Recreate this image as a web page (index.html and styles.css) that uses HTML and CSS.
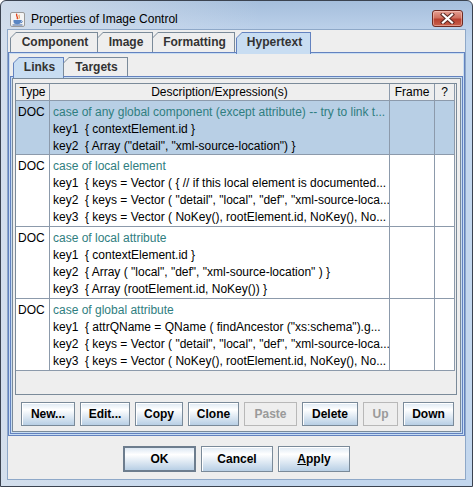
FILE: index.html
```html
<!DOCTYPE html>
<html>
<head>
<meta charset="utf-8">
<link rel="stylesheet" href="styles.css">
</head>
<body>
<div class="window">
  <div class="titlebar">
    <svg class="app-icon" width="15" height="15" viewBox="0 0 15 15">
      <rect x="0.5" y="0.5" width="14" height="14" rx="1.5" fill="#f4f4f4" stroke="#9a9a9a"/>
      <path d="M7 1.8 C5 3.8 9 4.8 7 7.2" fill="none" stroke="#e0401a" stroke-width="1.3"/>
      <path d="M9.3 2.8 C8.3 4.3 10.3 4.8 8.8 6.8" fill="none" stroke="#ee8a2a" stroke-width="1"/>
      <path d="M3.5 8 h7.5 v1.8 c0 2 -2 2.4 -3.75 2.4 s-3.75 -0.4 -3.75 -2.4 z" fill="#5a86c4"/>
      <path d="M11 8.6 c1.8 0 1.8 2 0 2.1" fill="none" stroke="#5a86c4" stroke-width="1"/>
      <path d="M2.5 13 h10" stroke="#3f64a0" stroke-width="1"/>
    </svg>
    <span class="title">Properties of Image Control</span>
    <div class="close-btn">
      <svg width="15" height="11" viewBox="0 0 15 11">
        <path d="M3 1.5 L12 9.5 M12 1.5 L3 9.5" stroke="#5e2a24" stroke-width="4.2" stroke-linecap="square"/>
        <path d="M3 1.5 L12 9.5 M12 1.5 L3 9.5" stroke="#ffffff" stroke-width="2.2" stroke-linecap="square"/>
      </svg>
    </div>
  </div>
  <div class="client">
    <div class="tabpane outer">
      <div class="tabs outer-tabs">
        <div class="tab first t-component"><span>Component</span></div>
        <div class="tab t-image"><span>Image</span></div>
        <div class="tab t-formatting"><span>Formatting</span></div>
        <div class="tab selected t-hypertext"><span>Hypertext</span></div>
      </div>
      <div class="tab-content outer-content">
        <div class="tabpane inner">
          <div class="tabs inner-tabs">
            <div class="tab first selected t-links"><span>Links</span></div>
            <div class="tab t-targets"><span>Targets</span></div>
          </div>
          <div class="tab-content inner-content">
            <div class="panel">
              <div class="scroll">
                <div class="grid">
                  <div class="row head">
                    <div class="cell c-type">Type</div>
                    <div class="cell c-desc">Description/Expression(s)</div>
                    <div class="cell c-frame">Frame</div>
                    <div class="cell c-q">?</div>
                  </div>
                  <div class="row r3 sel">
                    <div class="cell c-type">DOC</div>
                    <div class="cell c-desc"><div class="cap">case of any global component (except attribute) -- try to link t...</div><div>key1&nbsp; { contextElement.id }</div><div>key2&nbsp; { Array ("detail", "xml-source-location") }</div></div>
                    <div class="cell c-frame"></div>
                    <div class="cell c-q"></div>
                  </div>
                  <div class="row r4">
                    <div class="cell c-type">DOC</div>
                    <div class="cell c-desc"><div class="cap">case of local element</div><div>key1&nbsp; { keys = Vector ( { // if this local element is documented...</div><div>key2&nbsp; { keys = Vector ( "detail", "local", "def", "xml-source-loca...</div><div>key3&nbsp; { keys = Vector ( NoKey(), rootElement.id, NoKey(), No...</div></div>
                    <div class="cell c-frame"></div>
                    <div class="cell c-q"></div>
                  </div>
                  <div class="row r4">
                    <div class="cell c-type">DOC</div>
                    <div class="cell c-desc"><div class="cap">case of local attribute</div><div>key1&nbsp; { contextElement.id }</div><div>key2&nbsp; { Array ( "local", "def", "xml-source-location" ) }</div><div>key3&nbsp; { Array (rootElement.id, NoKey()) }</div></div>
                    <div class="cell c-frame"></div>
                    <div class="cell c-q"></div>
                  </div>
                  <div class="row r4">
                    <div class="cell c-type">DOC</div>
                    <div class="cell c-desc"><div class="cap">case of global attribute</div><div>key1&nbsp; { attrQName = QName ( findAncestor ("xs:schema").g...</div><div>key2&nbsp; { keys = Vector ( "detail", "local", "def", "xml-source-loca...</div><div>key3&nbsp; { keys = Vector ( NoKey(), rootElement.id, NoKey(), No...</div></div>
                    <div class="cell c-frame"></div>
                    <div class="cell c-q"></div>
                  </div>
                </div>
              </div>
              <div class="btn-row">
                <div class="btn w-new">New...</div>
                <div class="btn w-edit">Edit...</div>
                <div class="btn w-copy">Copy</div>
                <div class="btn w-clone">Clone</div>
                <div class="btn disabled w-paste">Paste</div>
                <div class="btn w-delete">Delete</div>
                <div class="btn disabled w-up">Up</div>
                <div class="btn w-down">Down</div>
              </div>
            </div>
          </div>
        </div>
      </div>
    </div>
    <div class="dialog-buttons">
      <div class="btn big default w-ok">OK</div>
      <div class="btn big w-cancel">Cancel</div>
      <div class="btn big w-apply"><u>A</u>pply</div>
    </div>
  </div>
</div>
</body>
</html>
```

FILE: styles.css
```css
* { box-sizing: border-box; }
html, body { margin: 0; padding: 0; }
body {
  width: 473px;
  height: 487px;
  overflow: hidden;
  background: #ffffff;
  font-family: "Liberation Sans", Arial, sans-serif;
  font-size: 12px;
}
.window {
  width: 473px;
  height: 487px;
  border: 1px solid #3b4350;
  border-radius: 6px 6px 0 0;
  padding: 0 7px 7px 7px;
  display: flex;
  flex-direction: column;
  background:
    linear-gradient(to right, rgba(214,224,236,0.85) 0%, rgba(214,224,236,0) 55%),
    linear-gradient(to bottom, #a5bedc 0px, #bcd1ea 29px, #c3d7ee 40px, #c3d7ee 100%);
}
.titlebar {
  height: 29px;
  flex: none;
  display: flex;
  align-items: flex-start;
}
.app-icon { margin: 11px 0 0 2px; flex: none; }
.title {
  margin: 11px 0 0 6px;
  font-size: 12px;
  line-height: 14px;
  color: #000000;
  flex: 1;
}
.close-btn {
  margin: 9px 2px 0 0;
  width: 31px;
  height: 17px;
  border: 1px solid #6e2a22;
  border-radius: 3px;
  background: linear-gradient(to bottom, #e6a093 0%, #d0705f 45%, #b8402f 55%, #c8604c 100%);
  box-shadow: inset 0 0 0 1px rgba(255,220,210,0.45);
  display: flex;
  align-items: center;
  justify-content: center;
}
.client {
  flex: 1;
  background: #eeeeee;
  box-shadow: 0 0 0 1px #8ea8c8;
  display: flex;
  flex-direction: column;
}

/* tabbed panes */
.tabpane { display: flex; flex-direction: column; }
.outer { padding-top: 2px; height: 406px; flex: none; }
.tabs { display: flex; padding-left: 2px; position: relative; z-index: 2; flex: none; }
.outer-tabs { height: 20px; }
.inner-tabs { height: 19px; padding-left: 3px; }
.tab {
  background: #7a8a99;
  clip-path: polygon(0 6px, 6px 0, 100% 0, 100% 100%, 0 100%);
  padding: 1px 1px 0 1px;
  margin-left: -1px;
  flex: none;
}
.tab.first { margin-left: 0; }
.outer-tabs .tab { height: 20px; }
.inner-tabs .tab { height: 19px; }
.tab span {
  display: block;
  height: 100%;
  background: #eeeeee;
  clip-path: polygon(0 5px, 5px 0, 100% 0, 100% 100%, 0 100%);
  font-weight: bold;
  color: #333333;
  text-align: center;
  padding: 0 0 0 2px;
}
.outer-tabs .tab span { line-height: 19px; }
.inner-tabs .tab span { line-height: 18px; }
.tab.selected { background: #6382bf; }
.outer-tabs .tab.selected { height: 22px; }
.inner-tabs .tab.selected { height: 21px; }
.tab.selected span { background: #c8ddf2; }
.t-component { width: 88px; }
.t-image { width: 56px; }
.t-formatting { width: 83px; }
.t-hypertext { width: 75px; margin-left: 1px; }
.t-links { width: 51px; }
.t-targets { width: 65px; }
.tab-content {
  flex: 1;
  border: 1px solid #6382bf;
  background: #c8ddf2;
  padding: 1px;
  display: flex;
  flex-direction: column;
}
.inner { flex: 1; background: #eeeeee; padding-top: 3px; }
.inner-content { background: #c8ddf2; }
.panel {
  flex: 1;
  background: #eeeeee;
  border: 1px solid #7a8a99;
  padding: 4px 3px 0 2px;
  display: flex;
  flex-direction: column;
}

/* table */
.scroll {
  height: 312px;
  flex: none;
  border: 1px solid #7a8a99;
  background: #eeeeee;
}
.grid { width: 439px; }
.row { display: flex; border-bottom: 1px solid #8c9aab; background: #ffffff; }
.row.head { height: 17px; background: #eeeeee; }
.row.r3 { height: 54px; }
.row.r4 { height: 72px; }
.row.sel { background: #b8cfe5; }
.cell {
  flex: none;
  border-right: 1px solid #8c9aab;
  white-space: nowrap;
  overflow: hidden;
  color: #000000;
  line-height: 17px;
  padding: 3px 0 0 3px;
}
.head .cell { text-align: center; padding: 0; line-height: 16px; }
.c-type { width: 34px; padding-left: 2px; }
.c-desc { width: 340px; }
.c-frame { width: 45px; }
.c-q { width: 20px; }
.cap { color: #2f7e80; }

/* buttons */
.btn-row {
  display: flex;
  justify-content: flex-end;
  gap: 5px;
  margin-top: 7px;
  padding-right: 3px;
}
.btn {
  height: 24px;
  border: 1px solid #7a8a99;
  background: linear-gradient(to bottom, #dde8f3 0%, #ffffff 30%, #b8cfe5 100%);
  box-shadow: inset 1px 1px 0 #ffffff;
  font-weight: bold;
  color: #000000;
  display: flex;
  align-items: center;
  justify-content: center;
  flex: none;
}
.btn.disabled {
  background: #eeeeee;
  border-color: #b8b8b8;
  color: #9a9a9a;
  box-shadow: none;
}
.w-new { width: 54px; }
.w-edit { width: 50px; }
.w-copy { width: 48px; }
.w-clone { width: 51px; }
.w-paste { width: 53px; }
.w-delete { width: 56px; }
.w-up { width: 35px; }
.w-down { width: 51px; }
.dialog-buttons {
  flex: 1;
  display: flex;
  justify-content: center;
  gap: 5px;
  padding-top: 10px;
}
.btn.big { height: 26px; }
.btn.default { border: 2px solid #6d7d8e; box-shadow: none; }
.w-ok { width: 73px; }
.w-cancel { width: 72px; }
.w-apply { width: 72px; }
```
